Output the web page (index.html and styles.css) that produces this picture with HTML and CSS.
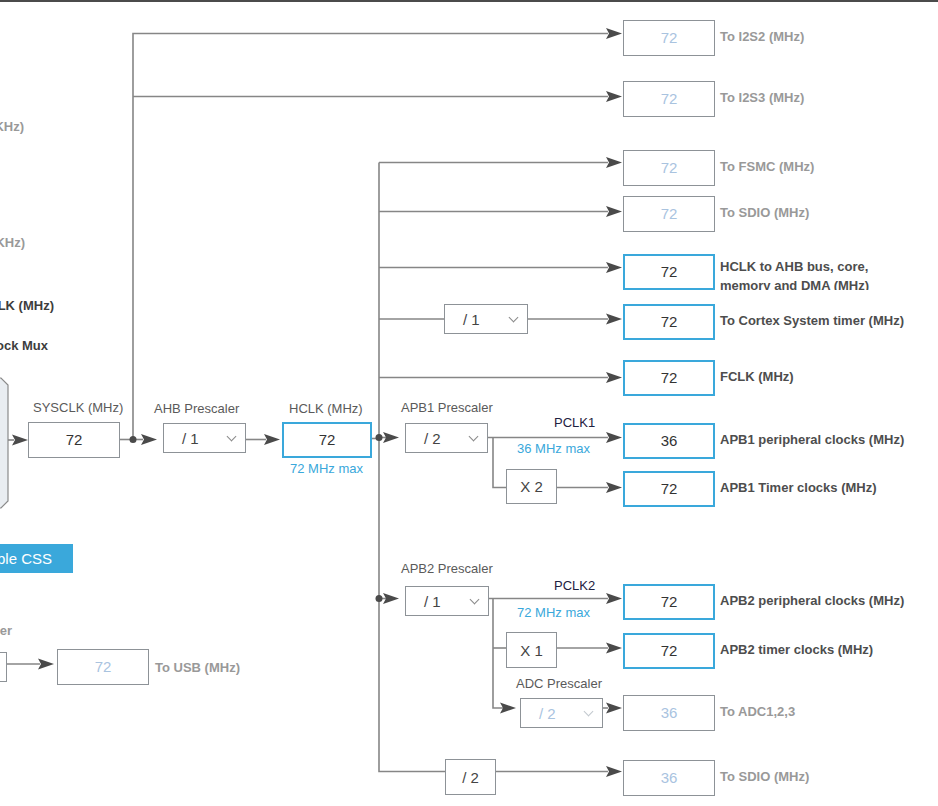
FILE: index.html
```html
<!DOCTYPE html>
<html>
<head>
<link rel="stylesheet" href="styles.css">
</head>
<body>

<div class="clock-tree">

  <svg class="wires" width="938" height="806" viewBox="0 0 938 806">
    <defs>
      <path id="arr" d="M-16,-5.5 L0,0 L-16,5.5 L-13,0 Z"/>
    </defs>
    <!-- system clock mux, cut by the left edge -->
    <path class="mux" d="M-4 378 H1 L8 385 V501 L1 508 H-4 Z"/>
    <g class="lines">
      <path d="M133 439.5 V33.5 H608"/>
      <path d="M133 96.5 H608"/>
      <path d="M8 440 H14"/>
      <path d="M119 439.5 H143"/>
      <path d="M246 439.5 H266"/>
      <path d="M372 438.5 H379"/>
      <path d="M379 162.5 V771.5 H445"/>
      <path d="M496 771.5 H608"/>
      <path d="M379 162.5 H608"/>
      <path d="M379 211.5 H608"/>
      <path d="M379 267.5 H608"/>
      <path d="M379 319 H444"/>
      <path d="M528 319 H608"/>
      <path d="M379 377.5 H608"/>
      <path d="M379 437.5 H386"/>
      <path d="M488 437.5 H608"/>
      <path d="M493 437.5 V487.5 H506"/>
      <path d="M557 487.5 H608"/>
      <path d="M379 598.5 H386"/>
      <path d="M489 598.5 H608"/>
      <path d="M493 598.5 V708 H503"/>
      <path d="M493 648 H506"/>
      <path d="M557 648 H608"/>
      <path d="M603 708 H608"/>
      <path d="M7 664 H40"/>
    </g>
    <g class="heads">
      <use href="#arr" x="622" y="33.5"/>
      <use href="#arr" x="622" y="96.5"/>
      <use href="#arr" x="622" y="162.5"/>
      <use href="#arr" x="622" y="211.5"/>
      <use href="#arr" x="622" y="267.5"/>
      <use href="#arr" x="622" y="319"/>
      <use href="#arr" x="622" y="377.5"/>
      <use href="#arr" x="622" y="437.5"/>
      <use href="#arr" x="622" y="487.5"/>
      <use href="#arr" x="622" y="598.5"/>
      <use href="#arr" x="622" y="648"/>
      <use href="#arr" x="622" y="708"/>
      <use href="#arr" x="622" y="771.5"/>
      <use href="#arr" x="28" y="440"/>
      <use href="#arr" x="157" y="439.5"/>
      <use href="#arr" x="280" y="439.5"/>
      <use href="#arr" x="399" y="437.5"/>
      <use href="#arr" x="399" y="598.5"/>
      <use href="#arr" x="516" y="708"/>
      <use href="#arr" x="54" y="664"/>
      <circle cx="133" cy="439.5" r="3.5"/>
      <circle cx="379" cy="437.5" r="3.5"/>
      <circle cx="379" cy="598.5" r="3.5"/>
    </g>
  </svg>

  <!-- left side, cut off by the viewport -->
  <div class="edge off e-rtc">To RTC (KHz)</div>
  <div class="edge off e-iwdg">To IWDG (KHz)</div>
  <div class="edge dark e-flit">To FLITFCLK (MHz)</div>
  <div class="edge dark e-mux">System Clock Mux</div>
  <div class="css-btn">Enable CSS</div>
  <div class="edge off e-usb">USB Prescaler</div>
  <div class="sel usb-sel">/ 1</div>
  <div class="val off usb-val">72</div>
  <div class="cap-bold off usb-label">To USB (MHz)</div>

  <!-- main path -->
  <div class="cap c-sysclk">SYSCLK (MHz)</div>
  <div class="val sysclk">72</div>
  <div class="cap c-ahb">AHB Prescaler</div>
  <div class="sel ahb">/ 1</div>
  <div class="cap c-hclk">HCLK (MHz)</div>
  <div class="val on hclk">72</div>
  <div class="cap max m-hclk">72 MHz max</div>

  <div class="sel cortex">/ 1</div>

  <div class="cap c-apb1">APB1 Prescaler</div>
  <div class="sel apb1">/ 2</div>
  <div class="cap pclk p1">PCLK1</div>
  <div class="cap max m-apb1">36 MHz max</div>
  <div class="mult x2">X 2</div>

  <div class="cap c-apb2">APB2 Prescaler</div>
  <div class="sel apb2">/ 1</div>
  <div class="cap pclk p2">PCLK2</div>
  <div class="cap max m-apb2">72 MHz max</div>
  <div class="mult x1">X 1</div>
  <div class="cap c-adc">ADC Prescaler</div>
  <div class="sel off adc">/ 2</div>

  <div class="mult div2">/ 2</div>

  <!-- outputs -->
  <div class="out off r-i2s2"><div class="val">72</div><div class="out-label">To I2S2 (MHz)</div></div>
  <div class="out off r-i2s3"><div class="val">72</div><div class="out-label">To I2S3 (MHz)</div></div>
  <div class="out off r-fsmc"><div class="val">72</div><div class="out-label">To FSMC (MHz)</div></div>
  <div class="out off r-sdio"><div class="val">72</div><div class="out-label">To SDIO (MHz)</div></div>
  <div class="out r-ahb"><div class="val">72</div><div class="out-label wrap">HCLK to AHB bus, core, memory and DMA (MHz)</div></div>
  <div class="out r-cortex"><div class="val">72</div><div class="out-label">To Cortex System timer (MHz)</div></div>
  <div class="out r-fclk"><div class="val">72</div><div class="out-label">FCLK (MHz)</div></div>
  <div class="out r-apb1"><div class="val">36</div><div class="out-label">APB1 peripheral clocks (MHz)</div></div>
  <div class="out r-tim1"><div class="val">72</div><div class="out-label">APB1 Timer clocks (MHz)</div></div>
  <div class="out r-apb2"><div class="val">72</div><div class="out-label">APB2 peripheral clocks (MHz)</div></div>
  <div class="out r-tim2"><div class="val">72</div><div class="out-label">APB2 timer clocks (MHz)</div></div>
  <div class="out off r-adc"><div class="val">36</div><div class="out-label">To ADC1,2,3</div></div>
  <div class="out off r-sdio2"><div class="val">36</div><div class="out-label">To SDIO (MHz)</div></div>

</div>

</body>
</html>
```

FILE: styles.css
```css
* {
  box-sizing: border-box;
}

body {
  margin: 0;
  background: #fff;
  font-family: "Liberation Sans", Arial, sans-serif;
}

.clock-tree {
  position: relative;
  width: 938px;
  height: 806px;
  overflow: hidden;
}

/* dark rule along the top of the panel */
.clock-tree::before {
  content: '';
  position: absolute;
  left: 0;
  top: 0;
  width: 100%;
  height: 2px;
  background: #4b4b4b;
}

.wires {
  position: absolute;
  left: 0;
  top: 0;
}

.wires .lines path {
  fill: none;
  stroke: #868686;
  stroke-width: 1.6;
}

.wires .heads {
  fill: #4a4a4a;
}

.wires .mux {
  fill: #e9edf1;
  stroke: #8a8a8a;
  stroke-width: 1.2;
}

/* boxes */
.val,
.sel,
.mult {
  position: absolute;
  background: #fff;
  border: 1px solid #8d9297;
  font-size: 15px;
  display: flex;
  align-items: center;
}

.val {
  width: 92px;
  height: 36px;
  padding-bottom: 1px;
  justify-content: center;
  color: #333;
}

.out .val {
  position: static;
}

.val.on,
.out:not(.off) .val {
  border: 2px solid #3aa8db;
}

.val.off,
.out.off .val {
  color: #a9c3df;
}

.sel {
  width: 84px;
  height: 30px;
  justify-content: space-between;
  padding: 0 10px 0 18px;
  color: #444;
}

.sel::after {
  content: '';
  width: 6px;
  height: 6px;
  border-right: 1px solid #8a8a8a;
  border-bottom: 1px solid #8a8a8a;
  transform: rotate(45deg);
  margin-top: -4px;
}

.sel.off {
  color: #a9c3df;
}

.sel.off::after {
  border-color: #c2c8ce;
}

.mult {
  width: 51px;
  height: 36px;
  justify-content: center;
  color: #444;
}

/* captions */
.cap {
  position: absolute;
  font-size: 13px;
  line-height: 16px;
  color: #5a5a5a;
  white-space: nowrap;
}

.cap.max {
  color: #3aa8db;
}

.cap.pclk {
  color: #1e2140;
}

.cap-bold,
.edge {
  position: absolute;
  font-size: 13px;
  font-weight: bold;
  line-height: 16px;
  white-space: nowrap;
}

.off.cap-bold,
.edge.off {
  color: #999;
}

.edge.dark {
  color: #3d3d3d;
}

.e-rtc { right: 914px; top: 119px; }
.e-iwdg { right: 913px; top: 235px; }
.e-flit { right: 884px; top: 298px; }
.e-mux { right: 890px; top: 338px; }
.e-usb { right: 926px; top: 623px; }

.css-btn {
  position: absolute;
  right: 865px;
  top: 544px;
  height: 29px;
  padding: 0 21px 0 30px;
  background: #3aa8db;
  color: #fff;
  font-size: 15px;
  display: flex;
  align-items: center;
  white-space: nowrap;
}

.usb-sel { left: -77px; top: 652px; }
.usb-val { left: 57px; top: 649px; }
.usb-label { left: 155px; top: 660px; }

.c-sysclk { left: 33px; top: 400px; }
.sysclk { left: 28px; top: 422px; }
.c-ahb { left: 154px; top: 401px; }
.ahb { left: 163px; top: 423px; width: 83px; }
.c-hclk { left: 289px; top: 401px; }
.hclk { left: 282px; top: 422px; width: 90px; }
.m-hclk { left: 290px; top: 461px; }

.cortex { left: 444px; top: 304px; }

.c-apb1 { left: 401px; top: 400px; }
.apb1 { left: 405px; top: 423px; width: 83px; }
.p1 { left: 554px; top: 415px; }
.m-apb1 { left: 517px; top: 441px; }
.x2 { left: 506px; top: 469px; height: 35px; }

.c-apb2 { left: 401px; top: 561px; }
.apb2 { left: 405px; top: 586px; }
.p2 { left: 554px; top: 578px; }
.m-apb2 { left: 517px; top: 605px; }
.x1 { left: 506px; top: 632px; }
.c-adc { left: 516px; top: 676px; }
.adc { left: 520px; top: 698px; width: 83px; }

.div2 { left: 445px; top: 759px; }

/* output column */
.out {
  position: absolute;
  left: 623px;
  display: flex;
  align-items: flex-start;
}

.out-label {
  margin-left: 5px;
  padding-top: 9px;
  font-size: 13px;
  font-weight: bold;
  line-height: 16px;
  color: #4d4d4d;
  white-space: nowrap;
}

.out.off .out-label {
  color: #999;
}

.out-label.wrap {
  white-space: normal;
  width: 165px;
  height: 36px;
  overflow: hidden;
  padding-top: 4px;
  line-height: 18.5px;
}

.r-i2s2 { top: 20px; }
.r-i2s3 { top: 81px; }
.r-fsmc { top: 150px; }
.r-sdio { top: 196px; }
.r-ahb { top: 254px; }
.r-cortex { top: 304px; }
.r-fclk { top: 360px; }
.r-apb1 { top: 423px; }
.r-tim1 { top: 471px; }
.r-apb2 { top: 584px; }
.r-tim2 { top: 633px; }
.r-adc { top: 695px; }
.r-sdio2 { top: 760px; }
```
